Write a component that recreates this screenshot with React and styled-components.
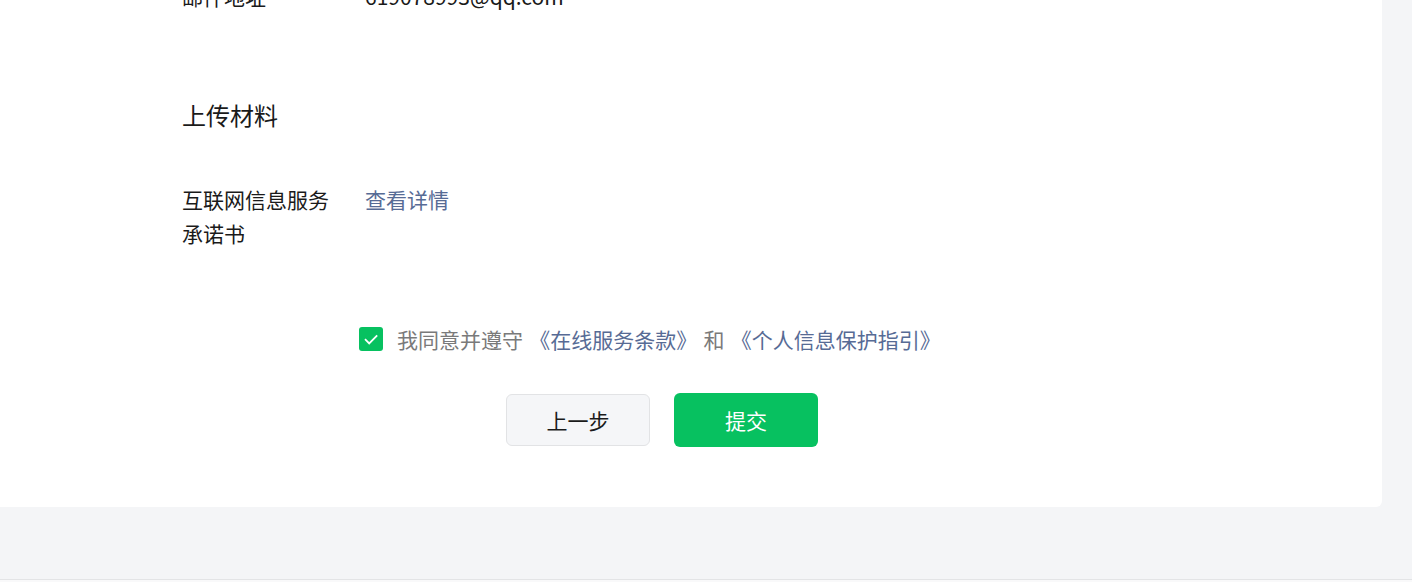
import React, { useState } from 'react';
import styled, { createGlobalStyle } from 'styled-components';

const GlobalStyle = createGlobalStyle`
  body {
    margin: 0;
    background: #f4f5f7;
    font-family: "Noto Sans CJK SC", "Noto Sans", sans-serif;
    color: #1a1a1a;
  }
`;

// white form card, scrolled so the top row is cut off
const Card = styled.section`
  width: 1382px;
  margin-top: -21px;
  background: #fff;
  border-bottom-right-radius: 6px;
  padding: 0 0 60px 182px;
  box-sizing: border-box;
`;

const Content = styled.div`
  width: 960px;
`;

const FieldRow = styled.div`
  display: flex;
  font-size: 21px;
  line-height: 34px;
  margin-top: ${(p) => p.$top || 0}px;
`;

const Label = styled.div`
  width: 183px;
  flex: none;
  padding-right: 20px;
  box-sizing: border-box;
  color: #1a1a1a;
`;

const Value = styled.div`
  color: #1a1a1a;
`;

const Link = styled.a`
  color: #576b95;
  text-decoration: none;
  cursor: pointer;
`;

const SectionTitle = styled.h3`
  margin: 85px 0 0;
  font-size: 24px;
  font-weight: 400;
  line-height: 34px;
  color: #1a1a1a;
`;

const Agreement = styled.label`
  display: flex;
  align-items: center;
  gap: 14px;
  margin: 72px 0 0 177px;
  font-size: 21px;
  line-height: 34px;
  word-spacing: 1.5px;
  color: #7a7a7a;
  cursor: pointer;
`;

const Check = styled.span`
  width: 24px;
  height: 24px;
  border-radius: 3px;
  background: ${(p) => (p.$on ? '#07c160' : '#fff')};
  border: ${(p) => (p.$on ? 'none' : '1px solid #ccc')};
  display: flex;
  align-items: center;
  justify-content: center;
  flex: none;
`;

const Buttons = styled.div`
  display: flex;
  justify-content: center;
  gap: 24px;
  margin-top: 37px;
`;

const Button = styled.button`
  width: 144px;
  height: ${(p) => (p.$primary ? 54 : 52)}px;
  margin-top: ${(p) => (p.$primary ? 0 : 1)}px;
  border-radius: 6px;
  font-family: inherit;
  font-size: 21px;
  cursor: pointer;
  border: ${(p) => (p.$primary ? 'none' : '1px solid #e2e3e5')};
  background: ${(p) => (p.$primary ? '#07c160' : '#f5f6f8')};
  color: ${(p) => (p.$primary ? '#fff' : '#1a1a1a')};
`;

const Footer = styled.div`
  margin-top: 72px;
  height: 3px;
  border-top: 1px solid #e3e4e6;
  background: #f9f9fa;
`;

export default function App() {
  const [agreed, setAgreed] = useState(true);
  return (
    <>
      <GlobalStyle />
      <Card>
        <Content>
          <FieldRow>
            <Label>邮件地址</Label>
            <Value>619078993@qq.com</Value>
          </FieldRow>

          <SectionTitle>上传材料</SectionTitle>

          <FieldRow $top={50}>
            <Label>互联网信息服务承诺书</Label>
            <Value>
              <Link>查看详情</Link>
            </Value>
          </FieldRow>

          <Agreement onClick={() => setAgreed(!agreed)}>
            <Check $on={agreed}>
              {agreed && (
                <svg width="24" height="24" viewBox="0 0 24 24" fill="none">
                  <path d="M6 12.2l4.2 4.2L18.2 8.4" stroke="#fff" strokeWidth="1.8" />
                </svg>
              )}
            </Check>
            <span>
              我同意并遵守 <Link>《在线服务条款》</Link> 和 <Link>《个人信息保护指引》</Link>
            </span>
          </Agreement>

          <Buttons>
            <Button>上一步</Button>
            <Button $primary>提交</Button>
          </Buttons>
        </Content>
      </Card>
      <Footer />
    </>
  );
}
